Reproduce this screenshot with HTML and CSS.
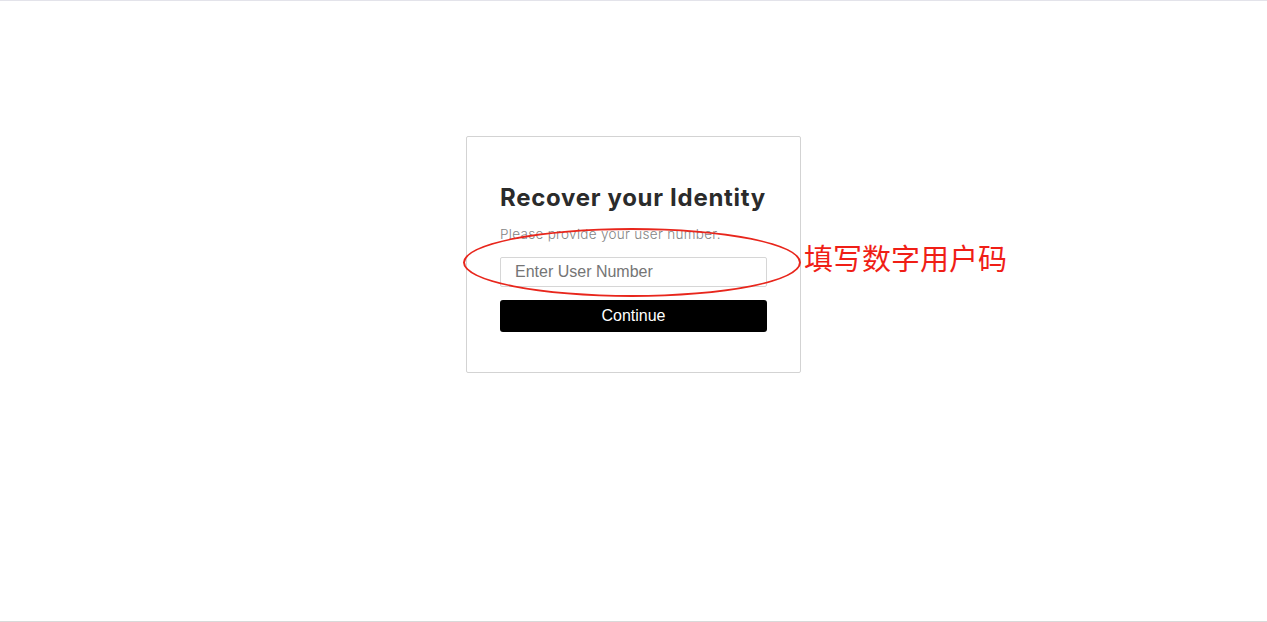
FILE: index.html
```html
<!DOCTYPE html>
<html>
<head>
<meta charset="utf-8">
<link rel="stylesheet" href="styles.css">
</head>
<body>
<div class="page">
  <div class="card">
    <h1 class="title">Recover your Identity</h1>
    <p class="subtitle">Please provide your user number.</p>
    <input class="field" type="text" placeholder="Enter User Number">
    <button class="btn">Continue</button>
    <div class="ellipse"></div>
    <div class="note">填写数字用户码</div>
  </div>
</div>
</body>
</html>
```
FILE: styles.css
```css
html, body {
  margin: 0;
  padding: 0;
  background: #fff;
}
body {
  border-top: 1px solid #e3e3ea;
  height: 620px;
  border-bottom: 1px solid #d9d9d9;
  font-family: "Liberation Sans", Arial, sans-serif;
}
.page {
  display: flex;
  justify-content: center;
  padding-top: 135px;
}
.card {
  position: relative;
  width: 267px;
  padding: 46px 33px 40px 33px;
  border: 1px solid #d3d3d3;
  border-radius: 2px;
  display: flex;
  flex-direction: column;
}
.title {
  margin: 0;
  font-family: "Inter", "Noto Sans", sans-serif;
  font-weight: 700;
  font-size: 24px;
  line-height: 30px;
  color: #2b2b2b;
  letter-spacing: 0.7px;
  white-space: nowrap;
}
.subtitle {
  margin: 13px 0 0 0;
  font-family: "Inter", "Noto Sans", sans-serif;
  font-weight: 300;
  font-size: 13.5px;
  line-height: 16px;
  color: #858585;
  letter-spacing: 0.3px;
  white-space: nowrap;
}
.field {
  margin-top: 15px;
  height: 30px;
  box-sizing: border-box;
  border: 1px solid #d6d6d6;
  border-radius: 2px;
  padding: 0 14px;
  font-family: "Liberation Sans", Arial, sans-serif;
  font-size: 16px;
  color: #333;
  outline: none;
}
.field::placeholder {
  color: #757575;
}
.btn {
  margin-top: 13px;
  height: 32px;
  border: none;
  border-radius: 3px;
  background: #000;
  color: #fff;
  font-family: "Liberation Sans", Arial, sans-serif;
  font-size: 16px;
  padding: 0;
}
.ellipse {
  position: absolute;
  left: -4px;
  top: 91px;
  width: 334px;
  height: 65px;
  border: 2.5px solid #e8261c;
  border-radius: 50%;
  pointer-events: none;
}
.note {
  position: absolute;
  left: 337px;
  top: 102px;
  font-family: "Noto Sans CJK SC", sans-serif;
  font-size: 29px;
  line-height: 36px;
  color: #f01e16;
  white-space: nowrap;
}
```
